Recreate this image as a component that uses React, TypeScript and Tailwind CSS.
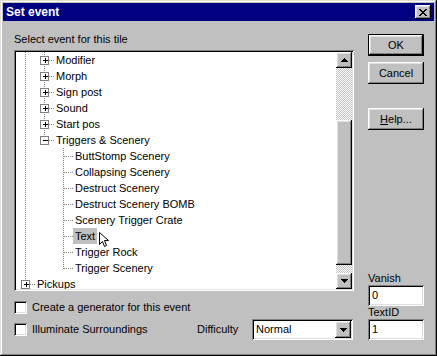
import React from "react";

type Row = {
  label: string;
  level: number;
  box?: "+" | "-";
  last?: boolean;
  selected?: boolean;
};

const rows: Row[] = [
  { label: "Modifier", level: 1, box: "+" },
  { label: "Morph", level: 1, box: "+" },
  { label: "Sign post", level: 1, box: "+" },
  { label: "Sound", level: 1, box: "+" },
  { label: "Start pos", level: 1, box: "+" },
  { label: "Triggers & Scenery", level: 1, box: "-", last: true },
  { label: "ButtStomp Scenery", level: 2 },
  { label: "Collapsing Scenery", level: 2 },
  { label: "Destruct Scenery", level: 2 },
  { label: "Destruct Scenery BOMB", level: 2 },
  { label: "Scenery Trigger Crate", level: 2 },
  { label: "Text", level: 2, selected: true },
  { label: "Trigger Rock", level: 2 },
  { label: "Trigger Scenery", level: 2, last: true },
  { label: "Pickups", level: 0, box: "+" },
];

const raised =
  "bg-[#c0c0c0] shadow-[inset_-1px_-1px_0_#000,inset_1px_1px_0_#fff,inset_-2px_-2px_0_#808080,inset_2px_2px_0_#dfdfdf]";
const sunken =
  "bg-white shadow-[inset_1px_1px_0_#808080,inset_-1px_-1px_0_#fff,inset_2px_2px_0_#000,inset_-2px_-2px_0_#dfdfdf]";
const dither =
  "bg-[repeating-conic-gradient(#c0c0c0_0%_25%,#ffffff_0%_50%)] bg-[length:2px_2px]";

function Connector({ row }: { row: Row }) {
  const x = 9 + 19 * row.level;
  const dot = { stroke: "#808080", strokeDasharray: "1 1" };
  return (
    <svg width={x + 10} height={16} shapeRendering="crispEdges" className="shrink-0">
      {row.level > 0 && <line x1={9.5} y1={0} x2={9.5} y2={16} {...dot} />}
      <line x1={x + 0.5} y1={0} x2={x + 0.5} y2={row.last ? 9 : 16} {...dot} />
      <line x1={x + 1} y1={8.5} x2={x + 10} y2={8.5} {...dot} />
      {row.box && (
        <g>
          <rect x={x - 3.5} y={4.5} width={8} height={8} fill="#fff" stroke="#808080" />
          <line x1={x - 1} y1={8.5} x2={x + 4} y2={8.5} stroke="#000" />
          {row.box === "+" && <line x1={x + 1.5} y1={6} x2={x + 1.5} y2={11} stroke="#000" />}
        </g>
      )}
    </svg>
  );
}

function Arrow({ down }: { down?: boolean }) {
  return (
    <svg width={7} height={4} shapeRendering="crispEdges">
      <polygon points={down ? "0,0 7,0 3.5,4" : "3.5,0 7,4 0,4"} fill="#000" />
    </svg>
  );
}

function Button({ children, primary }: { children: React.ReactNode; primary?: boolean }) {
  return (
    <div className={`h-[22px] w-[56px] ${primary ? "border border-black" : ""}`}>
      <div className={`flex h-full w-full items-center justify-center text-[11px] ${raised}`}>
        {children}
      </div>
    </div>
  );
}

function Checkbox({ label }: { label: string }) {
  return (
    <div className="flex items-center">
      <div className={`h-[13px] w-[13px] ${sunken}`} />
      <span className="ml-[5px] text-[11px] leading-[13px]">{label}</span>
    </div>
  );
}

export default function App() {
  return (
    <div className="flex h-[356px] w-[437px] flex-col bg-[#c0c0c0] p-[3px] font-['Liberation_Sans',Arial,sans-serif] text-black shadow-[inset_-1px_-1px_0_#000,inset_1px_1px_0_#dfdfdf,inset_-2px_-2px_0_#808080,inset_2px_2px_0_#fff]">
      <div className="flex h-[18px] items-center bg-[#000080] pl-[3px] pr-[3px]">
        <span className="text-[12px] font-bold text-white">Set event</span>
        <div className={`ml-auto flex h-[14px] w-[16px] items-center justify-center ${raised}`}>
          <svg width={8} height={7} shapeRendering="crispEdges">
            <path
              d="M0 0h2v1H0zM6 0h2v1H6zM1 1h2v1H1zM5 1h2v1H5zM2 2h4v1H2zM3 3h2v1H3zM2 4h4v1H2zM1 5h2v1H1zM5 5h2v1H5zM0 6h2v1H0zM6 6h2v1H6z"
              fill="#000"
            />
          </svg>
        </div>
      </div>

      <div className="flex flex-1">
        <div className="w-[351px] pl-[11px] pt-[12px]">
          <div className="h-[13px] text-[11px] leading-[13px]">Select event for this tile</div>
          <div className={`mt-[4px] flex h-[241px] w-[340px] p-[2px] ${sunken}`}>
            <div className="relative w-[320px] overflow-hidden">
              {rows.map((row) => (
                <div key={row.label} className="flex h-[16px] items-center">
                  <Connector row={row} />
                  <span
                    className={`whitespace-nowrap px-[2px] text-[11px] leading-[16px] ${
                      row.selected ? "bg-[#c0c0c0]" : ""
                    }`}
                  >
                    {row.label}
                  </span>
                </div>
              ))}
              <svg width={12} height={16} className="absolute left-[83px] top-[180px]">
                <polygon
                  points="0.5,0.5 0.5,12.5 3.5,9.5 5.5,14.5 7.5,13.5 5.5,8.5 9.5,8.5"
                  fill="#fff"
                  stroke="#000"
                />
              </svg>
            </div>
            <div className="flex w-[16px] flex-col">
              <div className={`flex h-[16px] items-center justify-center ${raised}`}>
                <Arrow />
              </div>
              <div className={`h-[52px] ${dither}`} />
              <div className={`h-[145px] ${raised}`} />
              <div className={`flex-1 ${dither}`} />
              <div className={`flex h-[16px] items-center justify-center ${raised}`}>
                <Arrow down />
              </div>
            </div>
          </div>

          <div className="mt-[10px]">
            <Checkbox label="Create a generator for this event" />
          </div>
          <div className="mt-[5px] flex h-[21px] items-center">
            <Checkbox label="Illuminate Surroundings" />
            <span className="ml-auto w-[55px] text-[11px]">Difficulty</span>
            <div className={`mr-[1px] flex h-[21px] w-[101px] items-center p-[2px] ${sunken}`}>
              <span className="flex-1 pl-[2px] text-[11px]">Normal</span>
              <div className={`flex h-[17px] w-[16px] items-center justify-center ${raised}`}>
                <Arrow down />
              </div>
            </div>
          </div>
        </div>

        <div className="ml-[14px] flex w-[56px] flex-col pb-[13px] pt-[13px]">
          <Button primary>OK</Button>
          <div className="mt-[6px]">
            <Button>Cancel</Button>
          </div>
          <div className="mt-[24px]">
            <Button>
              <span>
                <span className="underline">H</span>elp...
              </span>
            </Button>
          </div>
          <div className="mt-auto h-[13px] text-[11px] leading-[13px]">Vanish</div>
          <div className={`flex h-[21px] items-center pl-[4px] text-[11px] ${sunken}`}>0</div>
          <div className="h-[13px] text-[11px] leading-[13px]">TextID</div>
          <div className={`flex h-[21px] items-center pl-[4px] text-[11px] ${sunken}`}>1</div>
        </div>
      </div>
    </div>
  );
}
